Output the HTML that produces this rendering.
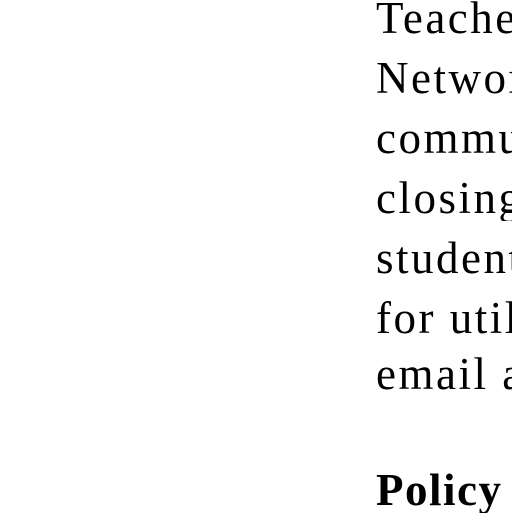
<!DOCTYPE html>
<html><head><style>
html,body{margin:0;padding:0;width:512px;height:512px;overflow:hidden;background:#fff;}
.l{position:absolute;left:376px;font-family:"Liberation Serif",serif;font-size:45px;line-height:45px;color:#000;white-space:nowrap;letter-spacing:2.5px;max-width:136px;overflow:hidden;}
</style></head><body>
<div class="l" style="top:-4px">Teacher</div>
<div class="l" style="top:56px">Network</div>
<div class="l" style="top:116px">community</div>
<div class="l" style="top:176px">closing</div>
<div class="l" style="top:236px">students</div>
<div class="l" style="top:296px">for utilizing</div>
<div class="l" style="top:352px">email and</div>
<div class="l" style="top:468px;font-weight:bold;letter-spacing:1.5px">Policy</div>
</body></html>
